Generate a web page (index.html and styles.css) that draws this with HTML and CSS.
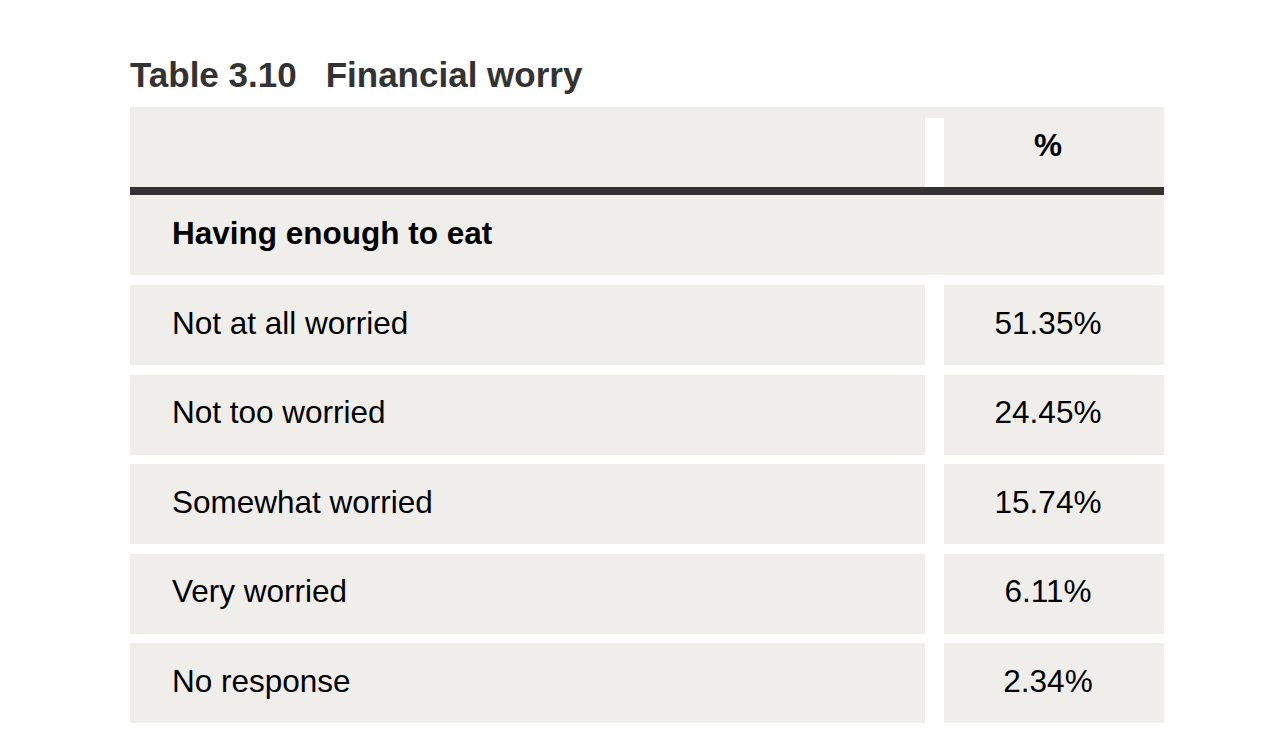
FILE: index.html
```html
<!DOCTYPE html>
<html lang="en">
<head>
<meta charset="utf-8">
<title>Table 3.10 Financial worry</title>
<link rel="stylesheet" href="styles.css">
</head>
<body>
<div class="page">
  <h1 class="title"><span class="title-num">Table 3.10</span><span class="title-name">Financial worry</span></h1>
  <div class="table">
    <div class="head">
      <div class="hcell"></div>
      <div class="head-gap"><div class="head-strip"></div></div>
      <div class="hcell hnum">%</div>
    </div>
    <div class="rule"></div>
    <div class="section">Having enough to eat</div>
    <div class="row"><div class="label">Not at all worried</div><div class="val">51.35%</div></div>
    <div class="row"><div class="label">Not too worried</div><div class="val">24.45%</div></div>
    <div class="row"><div class="label">Somewhat worried</div><div class="val">15.74%</div></div>
    <div class="row"><div class="label">Very worried</div><div class="val">6.11%</div></div>
    <div class="row"><div class="label">No response</div><div class="val">2.34%</div></div>
  </div>
</div>
</body>
</html>
```

FILE: styles.css
```css
html, body {
  margin: 0;
  padding: 0;
  background: #ffffff;
}
body {
  font-family: "Liberation Sans", Arial, sans-serif;
  color: #000000;
}
.page {
  width: 1034px;
  margin-left: 130px;
  padding-top: 55px;
}
.title {
  margin: 0;
  font-size: 35px;
  line-height: 40px;
  font-weight: 700;
  color: #333333;
  display: flex;
}
.title-name {
  margin-left: 29px;
}
.table {
  margin-top: 12px;
  display: flex;
  flex-direction: column;
}
.head {
  display: grid;
  grid-template-columns: 795px 19px 220px;
  height: 80px;
  background: #efeeea;
}
.head-strip {
  margin-top: 11px;
  height: 69px;
  background: #ffffff;
}
.hnum {
  display: flex;
  align-items: center;
  justify-content: center;
  padding-right: 12px;
  padding-bottom: 4px;
  font-size: 31.5px;
  font-weight: 700;
}
.rule {
  height: 8px;
  background: #333333;
}
.section {
  height: 80px;
  background: #efeeea;
  display: flex;
  align-items: center;
  padding-left: 42px;
  padding-bottom: 3px;
  box-sizing: border-box;
  font-size: 31.5px;
  font-weight: 700;
}
.row {
  display: grid;
  grid-template-columns: 795px 220px;
  column-gap: 19px;
  height: 80px;
  margin-top: 9.5px;
}
.section + .row {
  margin-top: 10px;
}
.label,
.val {
  background: #efeeea;
  display: flex;
  align-items: center;
  font-size: 31.5px;
  padding-bottom: 4px;
  box-sizing: border-box;
}
.label {
  padding-left: 42px;
}
.val {
  justify-content: center;
  padding-right: 12px;
}
```
